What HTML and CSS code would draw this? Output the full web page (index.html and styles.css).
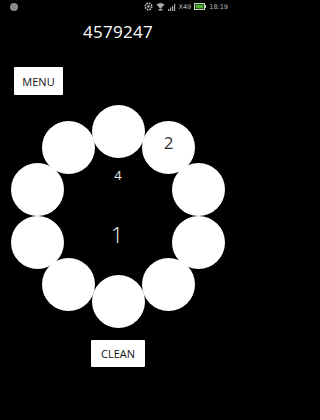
FILE: index.html
```html
<!DOCTYPE html>
<html>
<head>
<meta charset="utf-8">
<link rel="stylesheet" href="styles.css">
</head>
<body>
<div class="screen">
  <div class="status">
    <span class="dot"></span>
    <div class="icons">
      <svg class="ic gear" width="9" height="9" viewBox="0 0 9 9"><circle cx="4.5" cy="4.5" r="3.2" fill="none" stroke="#bbb" stroke-width="1.6" stroke-dasharray="1.6 0.9"/><circle cx="4.5" cy="4.5" r="1.2" fill="#bbb"/></svg>
      <svg class="ic wifi" width="9" height="9" viewBox="0 0 9 9"><path d="M0.5 2.5 Q4.5 -0.5 8.5 2.5 L4.5 7 Z" fill="#aaa"/><rect x="2.5" y="7" width="4" height="1.5" fill="#aaa"/></svg>
      <svg class="ic sig" width="8" height="8" viewBox="0 0 8 8"><rect x="0" y="6" width="1.2" height="2" fill="#aaa"/><rect x="2" y="4.5" width="1.2" height="3.5" fill="#aaa"/><rect x="4" y="3" width="1.2" height="5" fill="#aaa"/><rect x="6" y="1" width="1.2" height="7" fill="#aaa"/></svg>
      <span class="stxt">X49</span>
      <svg class="ic bat" width="12" height="7" viewBox="0 0 12 7"><rect x="0.5" y="0.5" width="10" height="6" fill="none" stroke="#ccc" stroke-width="1"/><rect x="1.5" y="1.5" width="8" height="4" fill="#4caf2a"/><rect x="10.5" y="2" width="1.5" height="3" fill="#ccc"/></svg>
      <span class="stxt">18:19</span>
    </div>
  </div>
  <div class="title">4579247</div>
  <div class="toolbar">
    <button class="btn menu">MENU</button>
  </div>
  <div class="ring">
    <div class="circle" style="left:91.5px;top:3.5px"></div>
    <div class="circle" style="left:141.5px;top:19.7px"><span class="num">2</span></div>
    <div class="circle" style="left:172.3px;top:62.2px"></div>
    <div class="circle" style="left:172.3px;top:114.8px"></div>
    <div class="circle" style="left:141.5px;top:157.3px"></div>
    <div class="circle" style="left:91.5px;top:173.5px"></div>
    <div class="circle" style="left:41.5px;top:157.3px"></div>
    <div class="circle" style="left:10.7px;top:114.8px"></div>
    <div class="circle" style="left:10.7px;top:62.2px"></div>
    <div class="circle" style="left:41.5px;top:19.7px"></div>
    <div class="center">
      <div class="small">4</div>
      <div class="big">1</div>
    </div>
  </div>
  <div class="bottom">
    <button class="btn clean">CLEAN</button>
  </div>
</div>
</body>
</html>
```
FILE: styles.css
```css
html, body {
  margin: 0;
  padding: 0;
  background: #000;
}
.screen {
  width: 236px;
  height: 420px;
  background: #000;
  font-family: "Open Sans", "Noto Sans", sans-serif;
  color: #fff;
  overflow: hidden;
}
.status {
  height: 13px;
  display: flex;
  align-items: center;
  justify-content: space-between;
  padding: 0 8px 0 10px;
}
.dot {
  width: 8px;
  height: 8px;
  border-radius: 50%;
  background: #8a8a8a;
}
.icons {
  display: flex;
  align-items: center;
  gap: 3px;
}
.ic {
  display: block;
}
.stxt {
  font-family: "DejaVu Sans", sans-serif;
  font-size: 6.5px;
  color: #bbb;
  line-height: 8px;
}
.title {
  text-align: center;
  font-size: 17px;
  line-height: 20px;
  margin-top: 9px;
  letter-spacing: 0.3px;
}
.toolbar {
  margin-top: 25px;
  padding-left: 14px;
  height: 28px;
}
.btn {
  background: #fff;
  color: #111;
  border: none;
  border-radius: 1px;
  font-family: "Open Sans", "Noto Sans", sans-serif;
  font-size: 11px;
  padding: 0;
  display: block;
}
.menu {
  width: 49px;
  height: 28px;
}
.ring {
  position: relative;
  height: 230px;
  margin-top: 6px;
}
.circle {
  position: absolute;
  width: 53px;
  height: 53px;
  border-radius: 50%;
  background: #fff;
  display: flex;
  align-items: center;
  justify-content: center;
}
.num {
  color: #333;
  font-size: 17px;
  margin-top: -9px;
  margin-left: 1px;
}
.center {
  display: flex;
  flex-direction: column;
  align-items: center;
  padding-top: 66px;
}
.small {
  font-size: 13px;
  line-height: 16px;
  color: #e8e8e8;
}
.big {
  font-size: 22px;
  font-weight: 300;
  line-height: 28px;
  margin-top: 37px;
  margin-left: -2px;
  color: #eee;
}
.bottom {
  display: flex;
  justify-content: center;
  margin-top: 9px;
}
.clean {
  width: 54px;
  height: 27px;
}
```
